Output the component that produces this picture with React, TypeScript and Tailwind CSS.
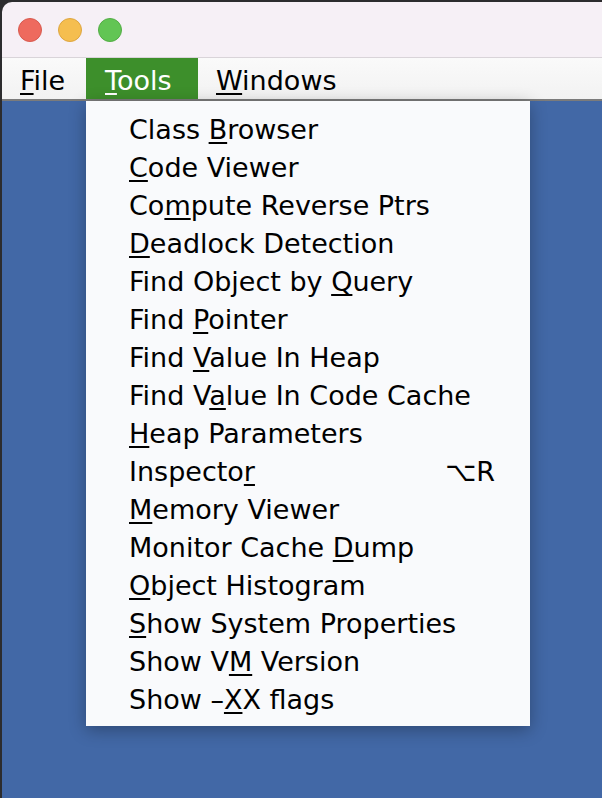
import React from "react"

type Item = { pre: string; key: string; post: string; shortcut?: string }

const items: Item[] = [
  { pre: "Class ", key: "B", post: "rowser" },
  { pre: "", key: "C", post: "ode Viewer" },
  { pre: "Co", key: "m", post: "pute Reverse Ptrs" },
  { pre: "", key: "D", post: "eadlock Detection" },
  { pre: "Find Object by ", key: "Q", post: "uery" },
  { pre: "Find ", key: "P", post: "ointer" },
  { pre: "Find ", key: "V", post: "alue In Heap" },
  { pre: "Find V", key: "a", post: "lue In Code Cache" },
  { pre: "", key: "H", post: "eap Parameters" },
  { pre: "Inspecto", key: "r", post: "", shortcut: "⌥R" },
  { pre: "", key: "M", post: "emory Viewer" },
  { pre: "Monitor Cache ", key: "D", post: "ump" },
  { pre: "", key: "O", post: "bject Histogram" },
  { pre: "", key: "S", post: "how System Properties" },
  { pre: "Show V", key: "M", post: " Version" },
  { pre: "Show –", key: "X", post: "X flags" },
]

function Mnemonic({ pre, keyChar, post }: { pre: string; keyChar: string; post: string }) {
  return (
    <span className="whitespace-pre">
      {pre}
      <span className="underline decoration-2 underline-offset-[3px] [text-decoration-skip-ink:none]">{keyChar}</span>
      {post}
    </span>
  )
}

export default function App() {
  return (
    <div className="w-[602px] h-[798px] bg-[#2c2c2e] pt-[2px] pl-[2px] flex overflow-hidden">
      <div
        className="relative flex-1 flex flex-col rounded-tl-[10px] overflow-hidden"
        style={{ fontFamily: '"DejaVu Sans", sans-serif' }}
      >
        {/* title bar */}
        <div className="h-[56px] bg-[#f6f0f6] border-b border-[#d9d4d9] flex items-center gap-4 pl-4">
          <div className="w-6 h-6 rounded-full bg-[#ee6a5e] border border-[#d85a4f]" />
          <div className="w-6 h-6 rounded-full bg-[#f5be4f] border border-[#dea640]" />
          <div className="w-6 h-6 rounded-full bg-[#62c554] border border-[#53ad45]" />
        </div>

        {/* menu bar */}
        <div className="h-[41px] bg-gradient-to-b from-[#fafafa] to-[#f2f2f2] flex items-stretch text-[27px] text-black">
          <div className="w-[84px] pl-[18px] pt-[6px] flex items-center">
            <Mnemonic pre="" keyChar="F" post="ile" />
          </div>
          <div className="w-[112px] pl-[19px] pt-[6px] flex items-center bg-[#3d8f2b] text-white">
            <Mnemonic pre="" keyChar="T" post="ools" />
          </div>
          <div className="pl-[18px] pt-[6px] flex items-center">
            <Mnemonic pre="" keyChar="W" post="indows" />
          </div>
        </div>
        <div className="h-[2px] bg-[#7b7b7b]" />

        {/* desktop */}
        <div className="flex-1 bg-[#4268a6]" />

        {/* Tools dropdown */}
        <div className="absolute left-[84px] top-[99px] w-[444px] bg-[#f9fafc] pt-[10px] pb-[7px] shadow-[0_4px_16px_rgba(0,0,0,0.3)]">
          {items.map((it, i) => (
            <div key={i} className="h-[38px] flex items-center justify-between pl-[43px] pr-[35px] text-[27px] text-black">
              <Mnemonic pre={it.pre} keyChar={it.key} post={it.post} />
              {it.shortcut && <span>{it.shortcut}</span>}
            </div>
          ))}
        </div>
      </div>
    </div>
  )
}
